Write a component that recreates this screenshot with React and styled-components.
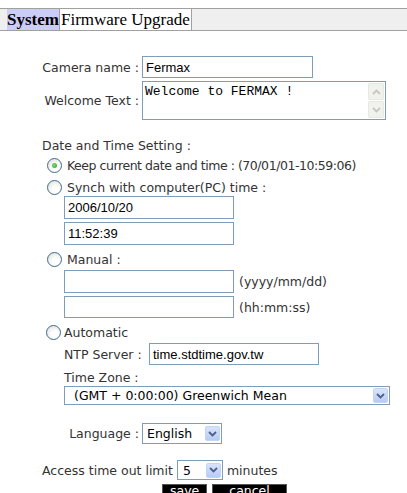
import React from 'react'
import styled, { createGlobalStyle } from 'styled-components'

const Global = createGlobalStyle`
  body {
    margin: 0;
    background: #fff;
    font-family: 'DejaVu Sans', Verdana, sans-serif;
    font-size: 12.5px;
    color: #333;
  }
`

const Page = styled.div`
  width: 407px;
  height: 493px;
  overflow: hidden;
  padding-top: 8px;
  box-sizing: border-box;
`

const TabBar = styled.div`
  display: flex;
  height: 21px;
  padding-left: 7px;
  border-top: 1px solid #a0a0a0;
  border-bottom: 1px solid #a0a0a0;
  background: #efefef;
`

const Tab = styled.div`
  font-family: 'Liberation Serif', 'Times New Roman', serif;
  font-size: 17px;
  line-height: 21px;
  color: #000;
  padding: 0 ${p => (p.$active ? '0' : '1px')};
  font-weight: ${p => (p.$active ? 'bold' : 'normal')};
  background: ${p => (p.$active ? '#ccccf8' : '#fff')};
  border-right: ${p => (p.$active ? 'none' : '1px solid #a0a0a0')};
  border-left: ${p => (p.$active ? 'none' : '1px solid #a0a0a0')};
`

const Form = styled.div`
  padding-left: 42px;
  padding-top: 25px;
`

const Grid = styled.div`
  display: grid;
  grid-template-columns: 100px auto;
  row-gap: 3px;
  align-items: center;
  margin-top: ${p => p.$mt ?? 0}px;
`

const Label = styled.div`
  text-align: right;
  padding-right: 3px;
  white-space: nowrap;
`

const Text = styled.div`
  line-height: 14px;
  white-space: nowrap;
  margin-top: ${p => p.$mt ?? 0}px;
`

const TextBox = styled.div`
  box-sizing: border-box;
  flex: none;
  width: ${p => p.$w ?? 170}px;
  height: ${p => p.$h ?? 23}px;
  border: 1px solid #7f9db9;
  background: #fff;
  font-family: 'Liberation Sans', Arial, sans-serif;
  font-size: 13px;
  color: #000;
  padding: 2px 3px 0;
  line-height: 17px;
`

const TextArea = styled.div`
  box-sizing: border-box;
  width: 244px;
  height: 39px;
  border: 1px solid #7f9db9;
  display: flex;
  justify-content: space-between;
`

const AreaText = styled.div`
  font-family: 'Liberation Mono', 'Courier New', monospace;
  font-size: 13px;
  color: #000;
  padding: 2px;
`

const ScrollTrack = styled.div`
  width: 16px;
  display: flex;
  flex-direction: column;
  padding: 1px;
  gap: 1px;
`

const ScrollBtn = styled.div`
  flex: 1;
  border: 1px solid #e8e8e2;
  border-radius: 2px;
  background: #f2f2ec;
  display: flex;
  align-items: center;
  justify-content: center;
`

const Section = styled.div`
  margin-top: 19px;
`

const RadioRow = styled.label`
  display: flex;
  align-items: center;
  height: 20px;
  white-space: nowrap;
  margin-top: ${p => p.$mt ?? 0}px;
  margin-left: ${p => p.$indent ?? 5}px;
  gap: ${p => p.$gap ?? 5}px;
  letter-spacing: ${p => (p.$tight ? '-0.45px' : 'normal')};
`

const Radio = styled.span`
  flex: none;
  width: 13px;
  height: 13px;
  border-radius: 50%;
  border: 1px solid #3d6b93;
  background: radial-gradient(circle at 60% 65%, #ffffff 30%, #d8d8cf 100%);
  display: flex;
  align-items: center;
  justify-content: center;
  &::after {
    content: '';
    width: 5px;
    height: 5px;
    border-radius: 50%;
    background: ${p => (p.$on ? 'radial-gradient(circle at 40% 40%, #7be078, #21a121)' : 'transparent')};
  }
`

const Indent = styled.div`
  margin-left: 22px;
  display: flex;
  flex-direction: column;
  gap: 3px;
  margin-top: ${p => p.$mt ?? 0}px;
`

const Line = styled.div`
  display: flex;
  align-items: center;
  white-space: nowrap;
  gap: ${p => p.$gap ?? 6}px;
  margin-top: ${p => p.$mt ?? 0}px;
`

const FieldLabel = styled.span`
  width: ${p => p.$w}px;
  flex: none;
`

const SelectBox = styled.div`
  box-sizing: border-box;
  flex: none;
  width: ${p => p.$w}px;
  height: ${p => p.$h ?? 20}px;
  border: 1px solid #7f9db9;
  background: #fff;
  display: flex;
  align-items: center;
  justify-content: space-between;
  padding-left: ${p => p.$pad ?? 4}px;
  color: #000;
`

const DropBtn = styled.div`
  width: 15px;
  height: 15px;
  margin-right: 1px;
  border-radius: 2px;
  background: linear-gradient(#d9e4fc, #b7cbf5);
  border: 1px solid #c6d4f4;
  box-sizing: border-box;
  display: flex;
  align-items: center;
  justify-content: center;
`

const Buttons = styled.div`
  display: flex;
  gap: 5px;
  margin-left: 120px;
  margin-top: 4px;
`

const Button = styled.div`
  background: #000;
  color: #fff;
  font-size: 12.5px;
  line-height: 11px;
  height: 16px;
  padding: 0 ${p => p.$pad}px;
  border: 1px solid #555;
`

const Chevron = ({ up, color = '#4d6185' }) => (
  <svg width="9" height="6" viewBox="0 0 9 6">
    <path
      d={up ? 'M1 5 L4.5 1.5 L8 5' : 'M1 1 L4.5 4.5 L8 1'}
      fill="none"
      stroke={color}
      strokeWidth="1.8"
    />
  </svg>
)

const Select = ({ w, h, pad, children }) => (
  <SelectBox $w={w} $h={h} $pad={pad}>
    <span>{children}</span>
    <DropBtn>
      <Chevron />
    </DropBtn>
  </SelectBox>
)

export default function App() {
  return (
    <Page>
      <Global />
      <TabBar>
        <Tab $active>System</Tab>
        <Tab>Firmware Upgrade</Tab>
      </TabBar>

      <Form>
        <Grid>
          <Label>Camera name :</Label>
          <TextBox $w={171} $h={22}>Fermax</TextBox>
          <Label>Welcome Text :</Label>
          <TextArea>
            <AreaText>Welcome to FERMAX !</AreaText>
            <ScrollTrack>
              <ScrollBtn>
                <Chevron up color="#c4c8bc" />
              </ScrollBtn>
              <ScrollBtn>
                <Chevron color="#c4c8bc" />
              </ScrollBtn>
            </ScrollTrack>
          </TextArea>
        </Grid>

        <Section>
          <Text>Date and Time Setting :</Text>
          <RadioRow $mt={2} $tight>
            <Radio $on />
            Keep current date and time : (70/01/01-10:59:06)
          </RadioRow>
          <RadioRow $mt={2}>
            <Radio />
            Synch with computer(PC) time :
          </RadioRow>
          <Indent $mt={-1}>
            <TextBox>2006/10/20</TextBox>
            <TextBox>11:52:39</TextBox>
          </Indent>
          <RadioRow $mt={4}>
            <Radio />
            Manual :
          </RadioRow>
          <Indent $mt={1}>
            <Line $gap={5}>
              <TextBox />
              (yyyy/mm/dd)
            </Line>
            <Line $gap={5}>
              <TextBox $h={22} />
              (hh:mm:ss)
            </Line>
          </Indent>
          <RadioRow $mt={4} $indent={4} $gap={3}>
            <Radio />
            Automatic
          </RadioRow>
          <Indent $mt={1}>
            <Line $gap={0}>
              <FieldLabel $w={85}>NTP Server :</FieldLabel>
              <TextBox $h={22}>time.stdtime.gov.tw</TextBox>
            </Line>
            <Text $mt={3}>Time Zone :</Text>
            <div style={{ marginTop: -2 }}>
              <Select w={326} h={19} pad={9}>
                (GMT + 0:00:00) Greenwich Mean
              </Select>
            </div>
          </Indent>
        </Section>

        <Grid $mt={18}>
          <Label>Language :</Label>
          <Select w={80} h={21}>English</Select>
        </Grid>

        <Line $gap={4} $mt={16}>
          Access time out limit
          <Select w={46} pad={5}>5</Select>
          minutes
        </Line>
        <Buttons>
          <Button $pad={7}>save</Button>
          <Button $pad={16}>cancel</Button>
        </Buttons>
      </Form>
    </Page>
  )
}
